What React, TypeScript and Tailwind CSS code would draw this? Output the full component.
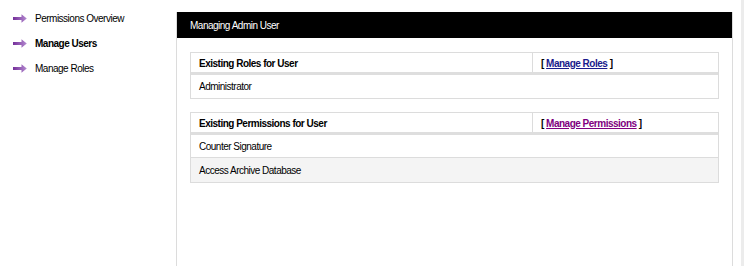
import React from "react";

function Arrow() {
  return (
    <svg width="14" height="9" viewBox="0 0 14 9" className="shrink-0">
      <defs>
        <linearGradient id="ag" x1="0" x2="1" y1="0" y2="0">
          <stop offset="0" stopColor="#75309a" />
          <stop offset="1" stopColor="#b48ad0" />
        </linearGradient>
      </defs>
      <path d="M0 3 H8.5 V0.3 L13.8 4.5 L8.5 8.7 V6 H0 Z" fill="url(#ag)" />
    </svg>
  );
}

const font = { fontFamily: "'Liberation Sans', Arial, sans-serif" };

export default function App() {
  return (
    <div className="w-[744px] h-[266px] flex bg-white text-[10px] tracking-[-0.5px] text-black overflow-hidden" style={font}>
      <div className="w-[176px] shrink-0 pt-[12px] pl-[13px]">
        {[
          { t: "Permissions Overview", b: false },
          { t: "Manage Users", b: true },
          { t: "Manage Roles", b: false },
        ].map((i) => (
          <div key={i.t} className="h-[25px] flex items-start gap-[8px]">
            <div className="pt-[2px]"><Arrow /></div>
            <span className={i.b ? "font-bold leading-[14px]" : "leading-[14px]"}>{i.t}</span>
          </div>
        ))}
      </div>
      <div className="w-[557px] shrink-0 mt-[12px] border-l border-r border-[#dcdcdc]">
        <div className="h-[26px] bg-black text-white flex items-center pl-[13px]">Managing Admin User</div>
        <div className="px-[13px] pt-[14px] flex flex-col gap-[13px]">
          <div className="border border-[#dcdcdc]">
            <div className="flex h-[22px] border-b-[3px] border-[#dedede]">
              <div className="w-[342px] border-r border-[#dcdcdc] font-bold flex items-center pl-[8px] pt-[1px]">Existing Roles for User</div>
              <div className="flex-1 flex items-center pl-[8px] pt-[1px] font-bold">
                [&nbsp;<a className="text-[#1a1a8c] underline" href="#">Manage Roles</a>&nbsp;]
              </div>
            </div>
            <div className="h-[23px] flex items-center pl-[8px]">Administrator</div>
          </div>
          <div className="border border-[#dcdcdc]">
            <div className="flex h-[22px] border-b-[3px] border-[#dedede]">
              <div className="w-[342px] border-r border-[#dcdcdc] font-bold flex items-center pl-[8px] pt-[1px]">Existing Permissions for User</div>
              <div className="flex-1 flex items-center pl-[8px] pt-[1px] font-bold">
                [&nbsp;<a className="text-[#800080] underline" href="#">Manage Permissions</a>&nbsp;]
              </div>
            </div>
            <div className="h-[23px] flex items-center pl-[8px] border-b border-[#dcdcdc]">Counter Signature</div>
            <div className="h-[24px] flex items-center pl-[8px] bg-[#f4f4f4]">Access Archive Database</div>
          </div>
        </div>
      </div>
      <div className="w-[8px] shrink-0" />
      <div className="w-[3px] shrink-0 bg-[#ececec]" />
    </div>
  );
}
